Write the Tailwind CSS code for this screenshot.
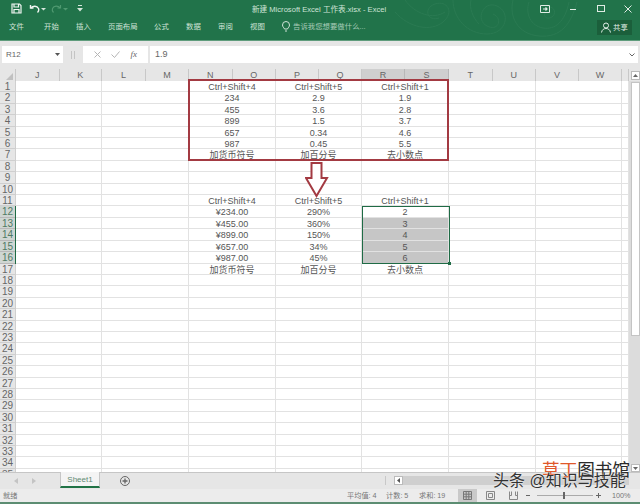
<!DOCTYPE html>
<html lang="zh">
<head>
<meta charset="UTF-8">
<title>新建 Microsoft Excel 工作表.xlsx - Excel</title>
<script src="https://cdn.jsdelivr.net/npm/@tailwindcss/browser@4"></script>
</head>
<body class="w-[640px] h-[504px] overflow-hidden bg-[#e6e6e6] text-[#555] font-['Liberation_Sans','Noto_Sans_CJK_SC',sans-serif]">
<div class="relative w-[640px] h-[504px] flex flex-col overflow-hidden">

  <!-- 标题栏 -->
  <header class="relative h-[41px] bg-[#21734a] text-[#cfe3d7] overflow-hidden border-b border-[#5f9c7c]">
    <svg class="absolute left-[395px] top-0" width="200" height="41" viewBox="0 0 200 41" fill="none" stroke="#2a7a52" stroke-width="1">
      <path d="M0 12c14 16 36 20 48 10s4-22-8-18-8 18 4 14"/>
      <path d="M10 0c10 14 28 20 40 12"/>
      <path d="M58 0c0 18 14 34 34 34s24-22 10-28-22 14-10 20 16-8 6-12"/>
      <path d="M76 0c-2 8 2 18 8 24"/>
      <path d="M118 0c-4 16 4 34 26 36s32-12 38-34"/>
      <path d="M134 2c-4 12 2 24 14 26s22-6 26-26"/>
      <path d="M150 8c8-4 12 4 8 8s-10 2-8-3"/>
    </svg>
    <div class="relative flex items-center h-[17px]">
      <svg class="ml-[11px]" width="11" height="11" viewBox="0 0 11 11" fill="none" stroke="#f0f6f2" stroke-width="1.2"><path d="M1 1h7.500L10 2.500V10H1z"/><path d="M3 1v3h4.500V1M3 10V6.500h5V10"/></svg>
      <svg class="ml-[7px]" width="11" height="10" viewBox="0 0 11 10" fill="none" stroke="#f0f6f2" stroke-width="1.4"><path d="M1.500 1v3h3"/><path d="M1.800 4C4 1.500 8 1.500 9.500 4.500c.5 1.500 0 3-1 4"/></svg>
      <svg class="ml-[1px]" width="5" height="4" viewBox="0 0 5 4" fill="#d5e6db"><path d="M0 1h5L2.500 3.500z"/></svg>
      <svg class="ml-[5px]" width="11" height="10" viewBox="0 0 11 10" fill="none" stroke="#4f9970" stroke-width="1.2"><path d="M9.500 1v3h-3"/><path d="M9.200 4C7 1.500 3 1.500 1.500 4.500c-.5 1.500 0 3 1 4"/></svg>
      <svg class="ml-[1px]" width="5" height="4" viewBox="0 0 5 4" fill="#4f9970"><path d="M0 1h5L2.500 3.500z"/></svg>
      <svg class="ml-[9px]" width="6" height="7" viewBox="0 0 6 7" fill="#d5e6db"><path d="M1 0h4v1H1zM0 3h6L3 6.500z"/></svg>
      <span class="absolute left-[252px] top-[2px] text-[7.6px] leading-[16px] whitespace-nowrap">新建 Microsoft Excel 工作表.xlsx - Excel</span>
      <svg class="absolute left-[540px] top-[5px]" width="10" height="8" viewBox="0 0 10 8" fill="none" stroke="#dfecE4"><path d="M.5.500h9v7h-9z"/><path d="M3 4h4M5.500 2.500L7 4 5.500 5.500" stroke-width="1.200"/></svg>
      <div class="absolute left-[570px] top-[9px] w-[6px] h-[1px] bg-[#dfece4]"></div>
      <div class="absolute left-[597px] top-[5px] w-[8px] h-[7px] border border-[#dfece4]"></div>
      <svg class="absolute left-[624px] top-[5px]" width="8" height="8" viewBox="0 0 8 8" stroke="#dfece4"><path d="M.5.500l7 7M7.500.500l-7 7"/></svg>
    </div>
    <nav class="relative h-[23px] text-[7.4px] leading-[20px] whitespace-nowrap">
      <span class="absolute left-[9px]">文件</span>
      <span class="absolute left-[44px]">开始</span>
      <span class="absolute left-[76px]">插入</span>
      <span class="absolute left-[108px]">页面布局</span>
      <span class="absolute left-[154px]">公式</span>
      <span class="absolute left-[186px]">数据</span>
      <span class="absolute left-[218px]">审阅</span>
      <span class="absolute left-[250px]">视图</span>
      <svg class="absolute left-[282px] top-[4px]" width="8" height="11" viewBox="0 0 8 11" fill="none" stroke="#cfe3d7"><path d="M2.500 8C2 6.500.5 6 .5 4a3.500 3.500 0 017 0C7.500 6 6 6.500 5.500 8zM3 10h2"/></svg>
      <span class="absolute left-[293px] text-[#a9ccb9]">告诉我您想要做什么...</span>
      <div class="absolute left-[597px] top-[3px] w-[35px] h-[15px] bg-[#1b5f3b] flex items-center justify-center gap-[2px] text-[#e4f0e9]">
        <svg width="10" height="11" viewBox="0 0 10 11" fill="none" stroke="#e4f0e9"><circle cx="5" cy="3.500" r="2.500"/><path d="M.5 10.500C1 7.500 3 6.500 5 6.500s4 1 4.500 4"/></svg>
        <span class="leading-[15px]">共享</span>
      </div>
    </nav>
  </header>

  <!-- 编辑栏 -->
  <div class="h-[28px] bg-[#e6e6e6] flex items-start pt-[5px] pl-[2px]">
    <div class="w-[61px] h-[17px] bg-white flex items-center justify-between pl-[4px] pr-[3px] text-[8px] text-[#666]">
      <span>R12</span>
      <svg width="5" height="3" viewBox="0 0 5 3" fill="#555"><path d="M0 0h5L2.500 3z"/></svg>
    </div>
    <div class="w-[20px] h-[17px] flex items-center justify-center gap-[2px]"><i class="block w-[1px] h-[8px] bg-[#c4c4c4]"></i><i class="block w-[1px] h-[8px] bg-[#c4c4c4]"></i></div>
    <div class="w-[65px] h-[17px] bg-white flex items-center justify-around px-[6px]">
      <svg width="7" height="7" viewBox="0 0 7 7" stroke="#b5b5b5"><path d="M.5.500l6 6M6.500.500l-6 6"/></svg>
      <svg width="9" height="7" viewBox="0 0 9 7" fill="none" stroke="#b5b5b5"><path d="M.5 3.500l3 3 5-6"/></svg>
      <span class="font-['Liberation_Serif',serif] italic text-[9px] text-[#666]">fx</span>
    </div>
    <div class="w-[2px]"></div>
    <div class="flex-1 h-[17px] bg-white flex items-center justify-between pl-[5px] pr-[1px] mr-[2px] text-[9px] text-[#666]">
      <span>1.9</span>
      <svg class="mr-[2px]" width="6" height="4" viewBox="0 0 6 4" fill="none" stroke="#666"><path d="M.5.500L3 3 5.500.500"/></svg>
    </div>
  </div>

  <!-- 列标题 -->
  <div class="h-[12px] flex text-[9px] leading-[12px] text-[#666] text-center bg-[#e6e6e6]">
    <div class="relative w-[16px] border-r border-[#c8c8c8]"><svg class="absolute right-[2px] bottom-[1px]" width="7" height="7" viewBox="0 0 7 7" fill="#c0c0c0"><path d="M7 0v7H0z"/></svg></div>
    <div id="cols" class="flex"></div>
  </div>

  <!-- 工作表 -->
  <div class="relative flex-1 flex bg-white overflow-hidden">
    <div id="rows" class="w-[629px] shrink-0"></div>
    <div class="relative flex-1 bg-[#dcdcdc]">
      <div class="absolute left-[2px] top-[1px] w-[9px] h-[254px] bg-white border border-[#c4c4c4]"></div>
      <div class="absolute left-[2px] bottom-0 w-[9px] h-[8px] bg-white border border-[#bbb] flex items-center justify-center"><svg width="5" height="3" viewBox="0 0 5 3" fill="#666"><path d="M0 0h5L2.500 3z"/></svg></div>
    </div>

    <!-- 选区 -->
    <div class="absolute left-[362px] top-[125px] w-[88px] h-[58px] border border-[#1f6b45]"></div>
    <div class="absolute left-[448px] top-[181px] w-[3px] h-[3px] bg-[#1f6b45]"></div>
    <div class="absolute left-[15px] top-[125px] w-[1px] h-[58px] bg-[#1f6b45]"></div>
  </div>

  <!-- 工作表标签 -->
  <div class="relative h-[17px] bg-[#e6e6e6] border-t border-[#c6c6c6]">
    <svg class="absolute left-[14px] top-[5px]" width="4" height="6" viewBox="0 0 4 6" fill="#c4c4c4"><path d="M4 0v6L0 3z"/></svg>
    <svg class="absolute left-[32px] top-[5px]" width="4" height="6" viewBox="0 0 4 6" fill="#c4c4c4"><path d="M0 0v6l4-3z"/></svg>
    <div class="absolute left-[60px] -top-[1px] w-[40px] h-[16px] bg-[#f4f4f4] border-x border-[#c6c6c6] border-b-2 border-b-[#217346] text-[#5f8a72] text-[8px] leading-[15px] text-center">Sheet1</div>
    <svg class="absolute left-[120px] top-[3px]" width="10" height="10" viewBox="0 0 10 10" fill="none" stroke="#666"><circle cx="5" cy="5" r="4.500"/><path d="M5 2.500v5M2.500 5h5" stroke-width="1.300"/></svg>
    <div class="absolute left-[385px] top-[3px] w-[1px] h-[9px] bg-[#c8c8c8]"></div>
    <div class="absolute left-[394px] top-[3px] w-[9px] h-[9px] bg-white border border-[#bbb] flex items-center justify-center"><svg width="3" height="5" viewBox="0 0 3 5" fill="#555"><path d="M3 0v5L0 2.500z"/></svg></div>
    <div class="absolute left-[403px] top-[3px] w-[226px] h-[9px] bg-[#cfcfcf]"></div>
  </div>

  <!-- 状态栏 -->
  <footer class="relative h-[13px] bg-[#ececec] text-[7.2px] leading-[13px] text-[#777]">
    <span class="absolute left-[3px]">就绪</span>
    <span class="absolute left-[347px]">平均值: 4</span>
    <span class="absolute left-[386px]">计数: 5</span>
    <span class="absolute left-[419px]">求和: 19</span>
    <div class="absolute left-[458px] top-0 w-[19px] h-[13px] bg-[#c9c9c9] flex items-center justify-center">
      <svg width="9" height="9" viewBox="0 0 9 9" fill="none" stroke="#777"><path d="M.5.500h8v8h-8zM.5 3.200h8M.5 5.800h8M3.200.500v8M5.800.500v8"/></svg>
    </div>
    <svg class="absolute left-[486px] top-[2px]" width="9" height="9" viewBox="0 0 9 9" fill="none" stroke="#888"><path d="M.5.500h8v8h-8zM2.500 2.500h4v4h-4z"/></svg>
    <svg class="absolute left-[509px] top-[2px]" width="9" height="9" viewBox="0 0 9 9" fill="none" stroke="#888"><path d="M.5.500v8h8v-8M.5 4.500h2V.500M8.500 4.500h-2V.500"/></svg>
    <div class="absolute left-[526px] top-[6px] w-[4px] h-[1px] bg-[#666]"></div>
    <div class="absolute left-[537px] top-[6px] w-[56px] h-[1px] bg-[#aaa]"></div>
    <div class="absolute left-[563px] top-[3px] w-[2px] h-[7px] bg-[#666]"></div>
    <div class="absolute left-[596px] top-[6px] w-[5px] h-[1px] bg-[#666]"></div>
    <div class="absolute left-[598px] top-[4px] w-[1px] h-[5px] bg-[#666]"></div>
    <span class="absolute left-[612px]">100%</span>
  </footer>
  <div class="h-[2px] bg-[#5c8d72]"></div>

  <!-- 滚动条上按钮，盖在列标题旁 -->
  <div class="absolute left-[631px] top-[71px] w-[9px] h-[9px] bg-white border border-[#bbb] flex items-center justify-center"><svg width="5" height="3" viewBox="0 0 5 3" fill="#666"><path d="M0 3h5L2.500 0z"/></svg></div>
  <!-- 红框 -->
  <div class="absolute left-[188px] top-[79px] w-[261px] h-[82px] border-[2px] border-[#a33a42]"></div>
  <!-- 箭头 -->
  <svg class="absolute left-[305px] top-[162px]" width="24" height="36" viewBox="0 0 24 36" fill="#fff" stroke="#a33a42" stroke-width="2"><path d="M6.500 1h10v15h5.500L11.500 34 1 16h5.500z"/></svg>

  <!-- 水印 -->
  <div class="absolute left-[542px] top-[459px] text-[17.600px] leading-[22px] whitespace-nowrap text-[#2a2a2a] [text-shadow:0_0_2px_#fff]"><span class="text-[#e0582a]">草丁</span>图书馆</div>
  <div class="absolute left-[493px] top-[470px] text-[16px] leading-[22px] whitespace-nowrap text-[#333] [text-shadow:0_0_2px_#fff]">头条 @知识与技能</div>
</div>

<script>
  // 列宽和行数据
  var colLetters = ['J','K','L','M','N','O','P','Q','R','S','T','U','V','W','X'];
  var colWidths = [43.5,42.5,44,43,43.500,43.500,43,43,43,44,43.500,43.500,43,43,7];
  var cols = document.getElementById('cols');
  colLetters.forEach(function (c, i) {
    var d = document.createElement('div');
    d.className = (c === 'R' || c === 'S') ? 'bg-[#cfcfcf] border-r border-[#b8b8b8] overflow-hidden' : 'border-r border-[#c8c8c8] overflow-hidden';
    d.style.width = colWidths[i] + 'px';
    d.textContent = c === 'X' ? '' : c;
    cols.appendChild(d);
  });

  var data = {
    1: ['Ctrl+Shift+4','Ctrl+Shift+5','Ctrl+Shift+1'],
    2: ['234','2.9','1.9'],
    3: ['455','3.6','2.8'],
    4: ['899','1.5','3.7'],
    5: ['657','0.34','4.6'],
    6: ['987','0.45','5.5'],
    7: ['加货币符号','加百分号','去小数点'],
    11: ['Ctrl+Shift+4','Ctrl+Shift+5','Ctrl+Shift+1'],
    12: ['¥234.00','290%','2'],
    13: ['¥455.00','360%','3'],
    14: ['¥899.00','150%','4'],
    15: ['¥657.00','34%','5'],
    16: ['¥987.00','45%','6'],
    17: ['加货币符号','加百分号','去小数点']
  };
  var widths = [86,87,87,86,87,87,86,7];
  var rows = document.getElementById('rows');
  for (var r = 1; r <= 35; r++) {
    var row = document.createElement('div');
    row.className = 'flex h-[11.42px] text-[9px] leading-[12px]';
    var h = document.createElement('div');
    var active = r >= 12 && r <= 16;
    h.className = active ? 'w-[16px] shrink-0 text-center text-[10px] bg-[#cfd6d2] text-[#4f7a64] border-r border-b border-[#b8b8b8]' : 'w-[16px] shrink-0 text-center text-[10px] bg-[#e6e6e6] text-[#666] border-r border-b border-[#cfcfcf]';
    h.textContent = r;
    row.appendChild(h);
    widths.forEach(function (w, i) {
      var c = document.createElement('div');
      var grey = i === 4 && r >= 13 && r <= 16;
      c.className = (grey ? 'bg-[#c6c6c6] ' : '') + 'shrink-0 text-center text-[#555] whitespace-nowrap overflow-hidden border-r border-b border-[#e2e2e2]';
      c.style.width = w + 'px';
      if (data[r] && i >= 2 && i <= 4) c.textContent = data[r][i - 2];
      row.appendChild(c);
    });
    rows.appendChild(row);
  }
</script>
</body>
</html>
